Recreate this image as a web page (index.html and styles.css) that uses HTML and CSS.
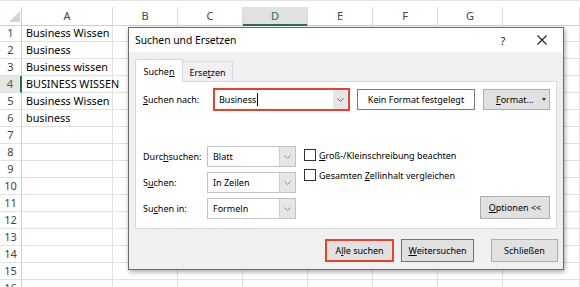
FILE: index.html
```html
<!DOCTYPE html>
<html lang="de">
<head>
<meta charset="utf-8">
<title>Suchen und Ersetzen</title>
<link rel="stylesheet" href="styles.css">
</head>
<body>
<div class="sheet">
  <div class="topstrip"></div>
  <div class="row hdr">
    <div class="corner"><svg width="22" height="18" viewBox="0 0 22 18"><polygon points="20,4 20,15 9,15" fill="#d4d4d4"/></svg></div>
    <div class="ch">A</div><div class="ch">B</div><div class="ch">C</div><div class="ch sel">D</div><div class="ch">E</div><div class="ch">F</div><div class="ch">G</div><div class="ch"></div>
  </div>
  <div class="row"><div class="rh">1</div><div class="c">Business Wissen</div><div></div><div></div><div></div><div></div><div></div><div></div><div></div></div>
  <div class="row"><div class="rh">2</div><div class="c">Business</div><div></div><div></div><div></div><div></div><div></div><div></div><div></div></div>
  <div class="row"><div class="rh">3</div><div class="c">Business wissen</div><div></div><div></div><div></div><div></div><div></div><div></div><div></div></div>
  <div class="row"><div class="rh sel">4</div><div class="c">BUSINESS WISSEN</div><div></div><div></div><div></div><div></div><div></div><div></div><div></div></div>
  <div class="row"><div class="rh">5</div><div class="c">Business Wissen</div><div></div><div></div><div></div><div></div><div></div><div></div><div></div></div>
  <div class="row"><div class="rh">6</div><div class="c">business</div><div></div><div></div><div></div><div></div><div></div><div></div><div></div></div>
  <div class="row"><div class="rh">7</div><div class="c"></div><div></div><div></div><div></div><div></div><div></div><div></div><div></div></div>
  <div class="row"><div class="rh">8</div><div class="c"></div><div></div><div></div><div></div><div></div><div></div><div></div><div></div></div>
  <div class="row"><div class="rh">9</div><div class="c"></div><div></div><div></div><div></div><div></div><div></div><div></div><div></div></div>
  <div class="row"><div class="rh">10</div><div class="c"></div><div></div><div></div><div></div><div></div><div></div><div></div><div></div></div>
  <div class="row"><div class="rh">11</div><div class="c"></div><div></div><div></div><div></div><div></div><div></div><div></div><div></div></div>
  <div class="row"><div class="rh">12</div><div class="c"></div><div></div><div></div><div></div><div></div><div></div><div></div><div></div></div>
  <div class="row"><div class="rh">13</div><div class="c"></div><div></div><div></div><div></div><div></div><div></div><div></div><div></div></div>
  <div class="row"><div class="rh">14</div><div class="c"></div><div></div><div></div><div></div><div></div><div></div><div></div><div></div></div>
  <div class="row"><div class="rh">15</div><div class="c"></div><div></div><div></div><div></div><div></div><div></div><div></div><div></div></div>
  <div class="row"><div class="rh">16</div><div class="c"></div><div></div><div></div><div></div><div></div><div></div><div></div><div></div></div>
</div>

<div class="dialog">
  <div class="titlebar">
    <span class="title">Suchen und Ersetzen</span>
    <span class="help">?</span>
    <svg class="close" width="10" height="10" viewBox="0 0 10 10"><path d="M0.5 0.5 L9.5 9.5 M9.5 0.5 L0.5 9.5" stroke="#1f1f1f" stroke-width="1.1" fill="none"/></svg>
  </div>
  <div class="dlg-body">
    <div class="tabs">
      <div class="tab active">Suche<u>n</u></div>
      <div class="tab">Erse<u>t</u>zen</div>
    </div>
    <div class="panel">
      <div class="find-row">
        <span class="lbl-find"><u>S</u>uchen nach:</span>
        <div class="combo">
          <span class="combo-text">Business<span class="caret"></span></span>
          <span class="drop"><svg width="7" height="4" viewBox="0 0 7 4"><polyline points="0.5,0.5 3.5,3.5 6.5,0.5" stroke="#707070" fill="none"/></svg></span>
        </div>
        <div class="btn btn-white">Kein Format festgelegt</div>
        <div class="btn btn-format"><span><u>F</u>ormat...</span><svg width="4" height="3" viewBox="0 0 4 3"><polygon points="0,0 4,0 2,3" fill="#333"/></svg></div>
      </div>
      <div class="options">
        <div class="selects">
          <span>Durc<u>h</u>suchen:</span>
          <div class="select"><span class="sel-text">Blatt</span><span class="sel-drop"><svg width="7" height="4" viewBox="0 0 7 4"><polyline points="0.5,0.5 3.5,3.5 6.5,0.5" stroke="#8a8a8a" fill="none"/></svg></span></div>
          <span>S<u>u</u>chen:</span>
          <div class="select"><span class="sel-text">In Zeilen</span><span class="sel-drop"><svg width="7" height="4" viewBox="0 0 7 4"><polyline points="0.5,0.5 3.5,3.5 6.5,0.5" stroke="#8a8a8a" fill="none"/></svg></span></div>
          <span>Su<u>c</u>hen in:</span>
          <div class="select"><span class="sel-text">Formeln</span><span class="sel-drop"><svg width="7" height="4" viewBox="0 0 7 4"><polyline points="0.5,0.5 3.5,3.5 6.5,0.5" stroke="#8a8a8a" fill="none"/></svg></span></div>
        </div>
        <div class="checks">
          <div class="check"><span class="box"></span><span><u>G</u>roß-/Kleinschreibung beachten</span></div>
          <div class="check"><span class="box"></span><span>Gesamten <u>Z</u>ellinhalt vergleichen</span></div>
        </div>
        <div class="btn btn-options"><u>O</u>ptionen &lt;&lt;</div>
      </div>
    </div>
    <div class="actions">
      <div class="btn btn-all">A<u>l</u>le suchen</div>
      <div class="btn btn-next"><u>W</u>eitersuchen</div>
      <div class="btn btn-close">Schließen</div>
    </div>
  </div>
</div>
</body>
</html>
```
FILE: styles.css
```css
* { box-sizing: border-box; margin: 0; padding: 0; }
html, body { width: 580px; height: 287px; overflow: hidden; background: #fff; }
body { position: relative; font-family: "Noto Sans", "Open Sans", sans-serif; color: #000; }

u { text-decoration: underline; text-underline-offset: 1px; text-decoration-thickness: 1px; }

/* spreadsheet */
.sheet { width: 580px; }
.topstrip { height: 7px; border-top: 1px solid #e4e4e4; }
.row {
  display: grid;
  grid-template-columns: 22px 91px 65px 65px 65px 65px 65px 65px 77px;
  height: 17px;
}
.row > div { border-right: 1px solid #e1e1e1; border-bottom: 1px solid #e1e1e1; }
.hdr { height: 18px; }
.hdr > div {
  border-right: 1px solid #dadada;
  border-bottom: 1px solid #cfcfcf;
  color: #444;
  font-size: 11px;
  line-height: 17px;
  text-align: center;
}
.hdr > .corner { border-right-color: #cfcfcf; }
.corner svg { display: block; }
.ch.sel { background: #e1e1e1; color: #217346; border-bottom: 2px solid #217346; }
.rh {
  color: #444;
  font-size: 11px;
  line-height: 16px;
  text-align: center;
}
.row > .rh { border-right-color: #cfcfcf; }
.row > .rh.sel { background: #e6e6e6; color: #217346; border-right: 2px solid #217346; }
.c {
  font-size: 10.8px;
  line-height: 16px;
  padding-left: 4px;
  white-space: nowrap;
  overflow: visible;
  position: relative;
  z-index: 1;
}

/* dialog */
.dialog {
  position: absolute;
  left: 128px;
  top: 27px;
  width: 436px;
  height: 243px;
  border: 1px solid #6c6c6c;
  background: #f0f0f0;
  box-shadow: 1px 2px 5px rgba(0, 0, 0, 0.35);
  font-size: 9px;
  display: flex;
  flex-direction: column;
  z-index: 5;
}
.titlebar {
  height: 24px;
  background: #fff;
  display: flex;
  align-items: center;
  padding-left: 6px;
}
.title { font-size: 10.3px; flex: 1; }
.help { font-size: 11px; width: 8px; text-align: center; margin-right: 30px; color: #222; }
.close { display: block; margin-right: 16px; }

.dlg-body { flex: 1; padding: 7px 6px 0 6px; display: flex; flex-direction: column; }
.tabs { display: flex; align-items: flex-end; height: 22px; }
.tab {
  height: 20px;
  width: 50px;
  border: 1px solid #d9d9d9;
  border-left: none;
  border-bottom: none;
  display: flex;
  align-items: center;
  justify-content: center;
  padding-top: 1px;
}
.tab.active {
  width: 48px;
  height: 23px;
  margin-bottom: -1px;
  background: #fff;
  border-left: 1px solid #d9d9d9;
  position: relative;
  z-index: 1;
}

.panel {
  height: 148px;
  background: #fff;
  border: 1px solid #d9d9d9;
  padding: 6px 6px 0 7px;
}
.find-row { display: flex; align-items: center; height: 23px; }
.lbl-find { width: 70px; }
.combo {
  width: 137px;
  height: 23px;
  border: 2px solid #e8412c;
  display: flex;
  align-items: center;
  background: #fff;
}
.combo-text { flex: 1; padding-left: 4px; display: flex; align-items: center; }
.caret { width: 1px; height: 13px; background: #000; margin-left: 1px; }
.drop {
  width: 14px;
  height: 19px;
  margin-right: 1px;
  background: #e6e6e6;
  display: flex;
  align-items: center;
  justify-content: center;
}
.drop svg, .sel-drop svg, .btn svg { display: block; }

.btn {
  height: 23px;
  background: #e1e1e1;
  border: 1px solid #adadad;
  display: flex;
  align-items: center;
  justify-content: center;
}
.btn-white { margin-left: 7px; width: 118px; height: 21px; background: #fff; border-color: #7a7a7a; }
.btn-format {
  margin-left: 8px;
  width: 67px;
  height: 21px;
  justify-content: space-between;
  padding: 0 3px 0 12px;
}

.options { display: flex; align-items: flex-end; margin-top: 35px; }
.selects {
  display: grid;
  grid-template-columns: 64px 89px;
  grid-auto-rows: 21px;
  row-gap: 5px;
  align-items: center;
}
.select {
  height: 21px;
  border: 1px solid #c3c3c3;
  display: flex;
  background: #fff;
}
.sel-text { flex: 1; padding-left: 5px; display: flex; align-items: center; }
.sel-drop {
  width: 16px;
  background: #e6e6e6;
  border-left: 1px solid #d0d0d0;
  display: flex;
  align-items: center;
  justify-content: center;
}
.checks {
  align-self: flex-start;
  margin-left: 8px;
  padding-top: 3px;
  display: flex;
  flex-direction: column;
  gap: 8px;
}
.check { display: flex; align-items: center; height: 12px; gap: 3px; }
.box { width: 12px; height: 12px; border: 1px solid #333; background: #fff; }
.btn-options { margin-left: auto; width: 70px; }

.actions { display: flex; justify-content: flex-end; margin-top: 10px; margin-right: -1px; }
.btn-all { width: 69px; border: 2px solid #e8412c; }
.btn-next { width: 73px; margin-left: 7px; border-color: #2d83d9; }
.btn-close { width: 67px; margin-left: 17px; }
```
